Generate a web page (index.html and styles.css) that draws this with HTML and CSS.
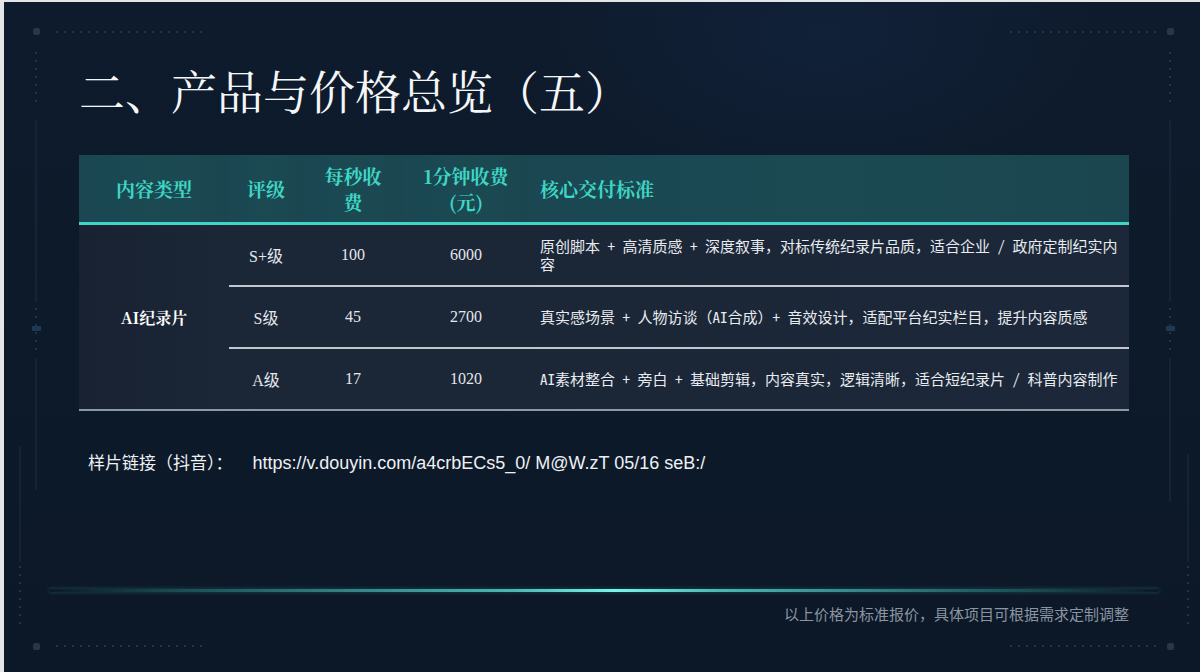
FILE: index.html
```html
<!DOCTYPE html>
<html lang="zh-CN">
<head>
<meta charset="utf-8">
<title>二、产品与价格总览（五）</title>
<link rel="stylesheet" href="styles.css">
</head>
<body>
<div class="slide">
  <svg class="deco" width="1196" height="670" viewBox="0 0 1196 670" aria-hidden="true">
    <g fill="#2a3647">
      <rect x="29" y="26" width="7" height="7" rx="2"/>
      <rect x="1163" y="26" width="7" height="7" rx="2"/>
      <rect x="29" y="641" width="7" height="7" rx="2"/>
      <rect x="1163" y="641" width="7" height="7" rx="2"/>
    </g>
    <g stroke="#243244" stroke-width="2" stroke-dasharray="2 6" fill="none">
      <line x1="52" y1="30" x2="200" y2="30"/>
      <line x1="1006" y1="30" x2="1152" y2="30"/>
      <line x1="52" y1="644" x2="200" y2="644"/>
      <line x1="1006" y1="644" x2="1152" y2="644"/>
      <line x1="32" y1="50" x2="32" y2="106"/>
      <line x1="1166" y1="50" x2="1166" y2="106"/>
      <line x1="16" y1="564" x2="16" y2="624"/>
      <line x1="1184" y1="564" x2="1184" y2="624"/>
      <line x1="32" y1="306" x2="32" y2="350"/>
      <line x1="1166" y1="306" x2="1166" y2="350"/>
    </g>
    <g stroke="#1a2738" stroke-width="1.5" fill="none">
      <line x1="32" y1="118" x2="32" y2="300"/>
      <line x1="1166" y1="118" x2="1166" y2="300"/>
      <line x1="32" y1="356" x2="32" y2="488"/>
      <line x1="1166" y1="356" x2="1166" y2="500"/>
      <line x1="16" y1="444" x2="16" y2="560"/>
      <line x1="1184" y1="452" x2="1184" y2="560"/>
    </g>
    <g fill="#1c3a58">
      <rect x="28" y="324" width="9" height="5" rx="1"/>
      <rect x="1162" y="324" width="9" height="5" rx="1"/>
    </g>
  </svg>

  <h1 class="title">二、产品与价格总览（五）</h1>

  <table class="price">
    <colgroup>
      <col class="c1"><col class="c2"><col class="c3"><col class="c4"><col class="c5">
    </colgroup>
    <thead>
      <tr>
        <th>内容类型</th>
        <th>评级</th>
        <th>每秒收<br>费</th>
        <th>1分钟收费<br>(元)</th>
        <th class="left">核心交付标准</th>
      </tr>
    </thead>
    <tbody>
      <tr>
        <td class="type" rowspan="3">AI纪录片</td>
        <td class="num">S+级</td>
        <td class="num">100</td>
        <td class="num">6000</td>
        <td class="desc">原创脚本 + 高清质感 + 深度叙事，对标传统纪录片品质，适合企业 / 政府定制纪实内容</td>
      </tr>
      <tr>
        <td class="num">S级</td>
        <td class="num">45</td>
        <td class="num">2700</td>
        <td class="desc">真实感场景 + 人物访谈（AI合成）+ 音效设计，适配平台纪实栏目，提升内容质感</td>
      </tr>
      <tr class="last">
        <td class="num">A级</td>
        <td class="num">17</td>
        <td class="num">1020</td>
        <td class="desc">AI素材整合 + 旁白 + 基础剪辑，内容真实，逻辑清晰，适合短纪录片 / 科普内容制作</td>
      </tr>
    </tbody>
  </table>

  <p class="link"><span class="link-label">样片链接（抖音）：</span><span class="link-url">https://v.douyin.com/a4crbECs5_0/ M@W.zT 05/16 seB:/</span></p>

  <div class="glow"></div>

  <p class="note">以上价格为标准报价，具体项目可根据需求定制调整</p>
</div>
</body>
</html>
```

FILE: styles.css
```css
html, body {
  margin: 0;
  padding: 0;
}

body {
  width: 1200px;
  height: 672px;
  background: #e4e5e7;
  overflow: hidden;
}

.slide {
  position: relative;
  box-sizing: border-box;
  width: 1196px;
  height: 670px;
  margin: 2px 0 0 4px;
  padding: 60px 71px 0 75px;
  display: flex;
  flex-direction: column;
  background:
    radial-gradient(ellipse 420px 240px at 820px 30px, rgba(22, 44, 80, 0.35), rgba(22, 44, 80, 0) 70%),
    linear-gradient(180deg, #0e1b2c 0%, #0d1a2a 50%, #0c1827 100%);
  font-family: "Noto Sans CJK SC", "Noto Sans", sans-serif;
}

.deco {
  position: absolute;
  left: 0;
  top: 0;
  pointer-events: none;
}

.title {
  position: relative;
  margin: 0;
  height: 54px;
  font-family: "Noto Serif CJK SC", "Noto Sans CJK SC", serif;
  font-size: 46px;
  line-height: 54px;
  font-weight: 400;
  color: #f4f6f8;
  letter-spacing: 0;
}

.price {
  position: relative;
  margin-top: 39px;
  width: 1050px;
  border-collapse: separate;
  border-spacing: 0;
  table-layout: fixed;
}

.c1 { width: 150px; }
.c2 { width: 74px; }
.c3 { width: 100px; }
.c4 { width: 126px; }
.c5 { width: 600px; }

.price thead th {
  height: 70px;
  padding: 0;
  box-sizing: border-box;
  background: linear-gradient(90deg, #1a4752 0%, #1b4a53 50%, #1b4650 100%);
  border-bottom: 3px solid #3fd6c6;
  color: #3fd6c4;
  font-family: "Noto Serif CJK SC", "Noto Sans CJK SC", serif;
  font-size: 19px;
  font-weight: 700;
  line-height: 26px;
  text-align: center;
  vertical-align: middle;
}

.price thead th.left {
  text-align: left;
  padding-left: 11px;
}

.price tbody td {
  height: 60px;
  padding: 0;
  background: #1b2637;
  color: #e6e9ee;
  vertical-align: middle;
  border-bottom: 2px solid #c3c8d0;
}

.price tbody tr.last td,
.price tbody td.type {
  border-bottom: 2px solid #8e97a4;
}

.price tbody td.type {
  background: linear-gradient(90deg, #182233 0%, #1b2637 100%);
  text-align: center;
  font-family: "Noto Serif CJK SC", "Noto Sans CJK SC", serif;
  font-size: 16px;
  font-weight: 700;
  color: #ffffff;
}

.price tbody td.num {
  text-align: center;
  font-family: "Liberation Serif", "Noto Sans CJK SC", serif;
  font-size: 16px;
  color: #e4e7ec;
}

.price tbody td.desc {
  padding: 0 10px 0 11px;
  font-family: "Noto Sans Mono CJK SC", "Noto Sans CJK SC", monospace;
  font-size: 15px;
  line-height: 18px;
  color: #e8ebef;
  background: linear-gradient(90deg, #1b2637 0%, #1c2839 100%);
}

.link {
  position: relative;
  margin: 38px 0 0 9px;
  line-height: 26px;
  color: #eef1f4;
  font-size: 17px;
}

.link-label {
  font-family: "Noto Sans CJK SC", sans-serif;
  margin-right: 20px;
}

.link-url {
  font-family: "Liberation Sans", Arial, sans-serif;
  font-size: 18px;
}

.glow {
  position: relative;
  margin: 113px 0 0 -30px;
  width: 1110px;
  height: 3px;
  border-radius: 2px;
  background: linear-gradient(90deg,
    rgba(60, 200, 190, 0) 0%,
    rgba(60, 200, 190, 0.3) 12%,
    rgba(90, 225, 212, 0.8) 42%,
    rgba(120, 245, 230, 1) 51%,
    rgba(90, 225, 212, 0.8) 60%,
    rgba(60, 200, 190, 0.3) 88%,
    rgba(60, 200, 190, 0) 100%);
  box-shadow: 0 0 4px rgba(80, 220, 205, 0.3);
}

.note {
  position: relative;
  margin: 11px 0 0 0;
  text-align: right;
  font-family: "Noto Sans CJK SC", sans-serif;
  font-size: 15px;
  line-height: 22px;
  color: #8b94a1;
}
```
